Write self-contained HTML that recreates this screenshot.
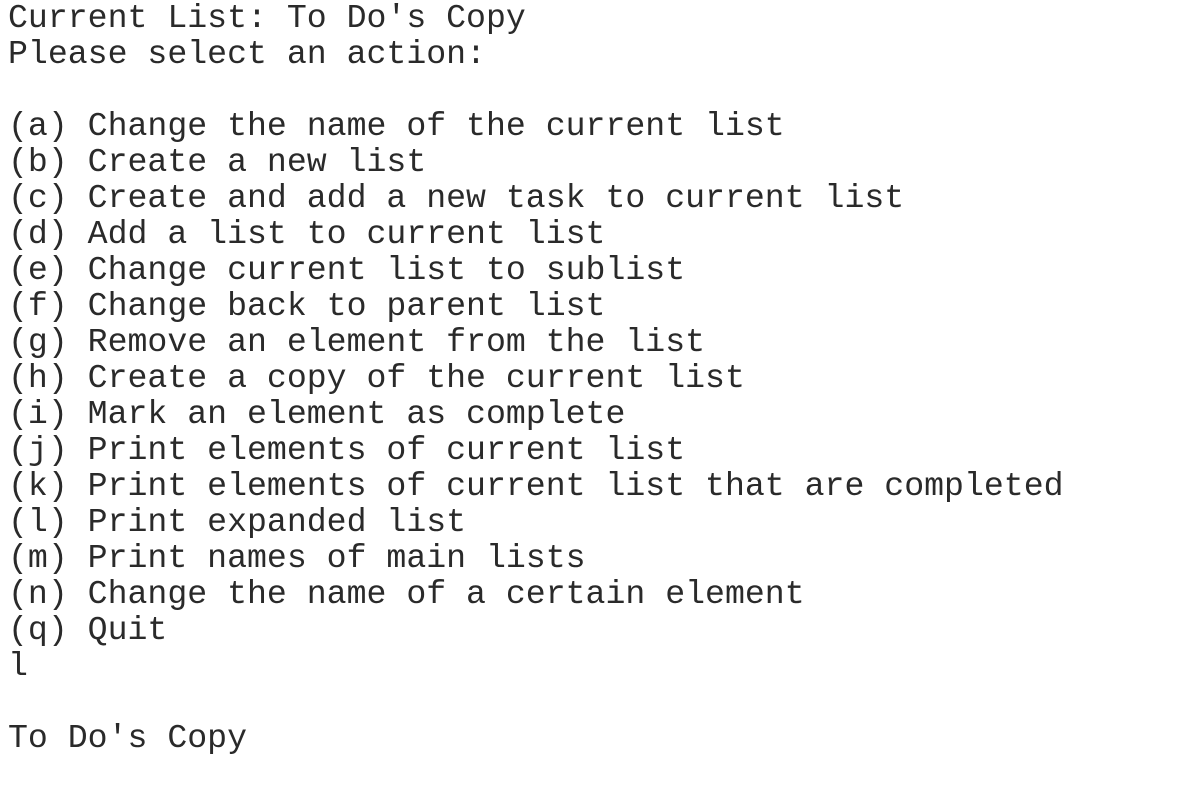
<!DOCTYPE html>
<html><head><meta charset="utf-8"><style>
html,body{margin:0;padding:0;background:#fff;width:1201px;height:788px;overflow:hidden}
pre{position:absolute;left:8px;top:0px;margin:0;font-family:"Liberation Mono",monospace;font-size:33.2px;line-height:36px;color:#2a2a2a}
</style></head><body><pre>Current List: To Do's Copy
Please select an action:

(a) Change the name of the current list
(b) Create a new list
(c) Create and add a new task to current list
(d) Add a list to current list
(e) Change current list to sublist
(f) Change back to parent list
(g) Remove an element from the list
(h) Create a copy of the current list
(i) Mark an element as complete
(j) Print elements of current list
(k) Print elements of current list that are completed
(l) Print expanded list
(m) Print names of main lists
(n) Change the name of a certain element
(q) Quit
l

To Do's Copy</pre></body></html>
